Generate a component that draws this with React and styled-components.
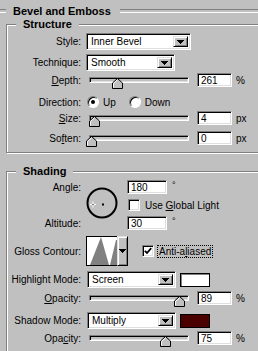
import React from "react";
import styled, { createGlobalStyle } from "styled-components";

const GlobalStyle = createGlobalStyle`
  * {
    margin: 0;
    padding: 0;
    box-sizing: border-box;
  }
  body {
    background: #c0c0c0;
    font-family: "Liberation Sans", Arial, sans-serif;
    font-size: 10px;
    color: #000;
  }
`;

const Panel = styled.div`
  width: 258px;
  height: 351px;
  overflow: hidden;
  background: #c0c0c0;
`;

const SectionTitle = styled.h1`
  display: flex;
  align-items: center;
  gap: 7px;
  height: 14px;
  margin-top: 4px;
  font-size: 11px;
  font-weight: bold;
  white-space: nowrap;

  &::before,
  &::after {
    content: "";
    height: 2px;
    border-top: 1px solid #808080;
    border-bottom: 1px solid #fff;
  }
  &::before {
    width: 6px;
  }
  &::after {
    flex: 1;
    margin-left: 2px;
  }
`;

const Group = styled.fieldset`
  margin: ${(p) => p.$mt || 0}px -20px 0 6px;
  padding: 0 0 ${(p) => p.$pb || 0}px 0;
  min-width: 0;
  border: 1px solid #808080;
  box-shadow: inset 1px 1px 0 #fff, 1px 1px 0 #fff;
`;

const Legend = styled.legend`
  margin-left: 9px;
  padding: 0 7px;
  height: 13px;
  line-height: 13px;
  font-size: 11px;
  font-weight: bold;
  background: #c0c0c0;
`;

const Row = styled.div`
  display: grid;
  grid-template-columns: 74px 1fr;
  column-gap: 5px;
  align-items: center;
  height: ${(p) => p.$h || 16}px;
  margin-top: ${(p) => p.$mt || 0}px;
`;

const AngleGrid = styled.div`
  display: grid;
  grid-template-columns: 74px 36px auto;
  grid-template-rows: 14px 14px 14px;
  column-gap: 5px;
  row-gap: 4px;
  align-items: center;
  margin-top: 2px;
`;

const Label = styled.span`
  text-align: right;
  white-space: nowrap;
  grid-column: 1;
  grid-row: ${(p) => p.$row || "auto"};
`;

const Field = styled.div`
  display: flex;
  align-items: center;
  white-space: nowrap;
  grid-column: ${(p) => p.$col || "auto"};
  grid-row: ${(p) => p.$row || "auto"};
`;

const sunken = `
  border: 1px solid;
  border-color: #808080 #fff #fff #808080;
  box-shadow: inset 1px 1px 0 #000, inset -1px -1px 0 #dfdfdf;
`;

const raised = `
  background: #c0c0c0;
  border: 1px solid;
  border-color: #dfdfdf #000 #000 #dfdfdf;
  box-shadow: inset 1px 1px 0 #fff, inset -1px -1px 0 #808080;
`;

const SelectBox = styled.div`
  display: flex;
  align-items: center;
  justify-content: space-between;
  width: ${(p) => p.$w}px;
  height: 17px;
  margin-left: ${(p) => p.$ml || 0}px;
  padding: 2px 2px 2px 4px;
  background: #fff;
  ${sunken}
`;

const ArrowButton = styled.span`
  display: flex;
  align-items: center;
  justify-content: center;
  width: ${(p) => p.$w || 15}px;
  height: 100%;
  ${raised}
`;

const NumberBox = styled.input`
  width: ${(p) => p.$w || 35}px;
  height: 14px;
  margin-left: ${(p) => p.$ml || 0}px;
  padding-left: 3px;
  background: #fff;
  font: inherit;
  color: #000;
  outline: none;
  ${sunken}
`;

const Unit = styled.span`
  margin-left: ${(p) => p.$ml || 4}px;
  align-self: ${(p) => (p.$sup ? "flex-start" : "center")};
  font-size: ${(p) => (p.$sup ? 9 : 10)}px;
`;

const Track = styled.div`
  position: relative;
  width: 100px;
  height: 6px;
  margin-left: 3px;
  background: #c0c0c0;
  ${sunken}
`;

const Thumb = styled.svg`
  position: absolute;
  top: 0;
  width: 11px;
  height: 11px;
`;

const RadioOption = styled.span`
  display: flex;
  align-items: center;
  gap: 4px;
  margin-left: ${(p) => p.$ml || 0}px;
`;

const RadioCircle = styled.span`
  display: flex;
  align-items: center;
  justify-content: center;
  width: 12px;
  height: 12px;
  border-radius: 50%;
  background: #fff;
  border: 1px solid;
  border-color: #808080 #fff #fff #808080;
  box-shadow: inset 1px 1px 0 #000;

  &::after {
    content: "";
    width: 4px;
    height: 4px;
    border-radius: 50%;
    background: ${(p) => (p.$on ? "#000" : "transparent")};
  }
`;

const CheckBox = styled.span`
  display: flex;
  align-items: center;
  justify-content: center;
  width: 12px;
  height: 12px;
  margin-left: ${(p) => p.$ml || 0}px;
  background: #fff;
  ${sunken}
`;

const CheckText = styled.span`
  margin-left: ${(p) => p.$ml || 4}px;
  padding: 0 1px;
  border: 1px dotted ${(p) => (p.$focus ? "#000" : "transparent")};
  line-height: 11px;
`;

const Dial = styled.svg`
  grid-column: 2;
  grid-row: 1 / 4;
  align-self: start;
  margin-top: 7px;
`;

const ContourPicker = styled.div`
  display: flex;
  height: 30px;
`;

const ContourPreview = styled.div`
  width: 31px;
  height: 30px;
  background: #fff;
  border: 1px solid #000;
  border-right: none;
`;

const Swatch = styled.span`
  width: 30px;
  height: 14px;
  margin-left: 4px;
  background: ${(p) => p.$color};
  border: 1px solid #000;
  box-shadow: inset 1px 1px 0 ${(p) => (p.$color === "#fff" ? "#808080" : "#4b0000")};
`;

function DownArrow() {
  return (
    <svg width="7" height="4" viewBox="0 0 7 4" shapeRendering="crispEdges">
      <rect x="0" y="0" width="7" height="1" />
      <rect x="1" y="1" width="5" height="1" />
      <rect x="2" y="2" width="3" height="1" />
      <rect x="3" y="3" width="1" height="1" />
    </svg>
  );
}

function Select({ value, w, ml }) {
  return (
    <SelectBox $w={w} $ml={ml}>
      <span>{value}</span>
      <ArrowButton>
        <DownArrow />
      </ArrowButton>
    </SelectBox>
  );
}

function Slider({ at }) {
  return (
    <Track>
      <Thumb viewBox="0 0 11 11" style={{ left: `${-4 + at * 99}px` }}>
        <polygon points="0.5,10.5 0.5,5 5.5,0.5 10.5,5 10.5,10.5" fill="#c0c0c0" stroke="#000" />
        <polyline points="1.5,9.5 1.5,5.5 5.5,1.8" fill="none" stroke="#fff" />
      </Thumb>
    </Track>
  );
}

function SliderRow({ label, at, value, unit, mt }) {
  return (
    <Row $mt={mt}>
      <Label>{label}</Label>
      <Field>
        <Slider at={at} />
        <NumberBox readOnly value={value} $ml={8} />
        <Unit>{unit}</Unit>
      </Field>
    </Row>
  );
}

function Check() {
  return (
    <svg width="8" height="8" viewBox="0 0 8 8">
      <polyline points="0.8,3.8 3,6 7.2,1.2" fill="none" stroke="#000" strokeWidth="1.8" />
    </svg>
  );
}

export default function App() {
  return (
    <Panel>
      <GlobalStyle />
      <SectionTitle>Bevel and Emboss</SectionTitle>

      <Group $pb={6}>
        <Legend>Structure</Legend>
        <Row $mt={2}>
          <Label>Style:</Label>
          <Field>
            <Select value="Inner Bevel" w={105} />
          </Field>
        </Row>
        <Row $mt={5}>
          <Label>Technique:</Label>
          <Field>
            <Select value="Smooth" w={89} />
          </Field>
        </Row>
        <SliderRow mt={2} label={<><u>D</u>epth:</>} at={0.261} value="261" unit="%" />
        <Row $mt={6}>
          <Label>Direction:</Label>
          <Field>
            <RadioOption $ml={1}>
              <RadioCircle $on />
              Up
            </RadioOption>
            <RadioOption $ml={13}>
              <RadioCircle />
              Down
            </RadioOption>
          </Field>
        </Row>
        <SliderRow label={<><u>S</u>ize:</>} at={0.03} value="4" unit="px" />
        <SliderRow mt={4} label={<>So<u>f</u>ten:</>} at={0} value="0" unit="px" />
      </Group>

      <Group $mt={12}>
        <Legend>Shading</Legend>
        <AngleGrid>
          <Label $row={1}>An<u>g</u>le:</Label>
          <Dial width="32" height="32" viewBox="0 0 32 32">
            <circle cx="16" cy="16" r="14.5" fill="none" stroke="#000" strokeWidth="2" />
            <path d="M4 17.5h6M7 14.5v6" stroke="#fff" strokeWidth="1" />
            <rect x="6.5" y="17" width="1" height="1" fill="#000" />
            <rect x="16" y="16.5" width="2" height="2" fill="#000" />
          </Dial>
          <Field $col={3} $row={1}>
            <NumberBox readOnly value="180" $w={40} />
            <Unit $sup $ml={5}>°</Unit>
          </Field>
          <Field $col={3} $row={2}>
            <CheckBox $ml={1} />
            <CheckText $ml={3}>Use <u>G</u>lobal Light</CheckText>
          </Field>
          <Label $row={3}>Altitude:</Label>
          <Field $col={3} $row={3}>
            <NumberBox readOnly value="30" $w={40} />
            <Unit $sup $ml={5}>°</Unit>
          </Field>
        </AngleGrid>

        <Row $h={30} $mt={6}>
          <Label>Gloss Contour:</Label>
          <Field>
            <ContourPicker>
              <ContourPreview>
                <svg width="30" height="28" viewBox="0 0 30 28">
                  <polygon points="3,28 14,0 22,28" fill="#808080" />
                  <polygon points="23,28 29,3 30,3 30,28" fill="#808080" />
                </svg>
              </ContourPreview>
              <ArrowButton $w={11}>
                <DownArrow />
              </ArrowButton>
            </ContourPicker>
            <CheckBox $ml={14}>
              <Check />
            </CheckBox>
            <CheckText $ml={3} $focus>Anti-a<u>l</u>iased</CheckText>
          </Field>
        </Row>

        <Row $mt={5}>
          <Label>Highlight Mode:</Label>
          <Field>
            <Select value="Screen" w={89} ml={1} />
            <Swatch $color="#fff" />
          </Field>
        </Row>
        <SliderRow mt={3} label={<><u>O</u>pacity:</>} at={0.89} value="89" unit="%" />
        <Row $mt={6}>
          <Label>Shadow Mode:</Label>
          <Field>
            <Select value="Multiply" w={89} ml={1} />
            <Swatch $color="#4b0000" />
          </Field>
        </Row>
        <SliderRow mt={2} label={<>Opa<u>c</u>ity:</>} at={0.75} value="75" unit="%" />
        <Row $h={40} />
      </Group>
    </Panel>
  );
}
